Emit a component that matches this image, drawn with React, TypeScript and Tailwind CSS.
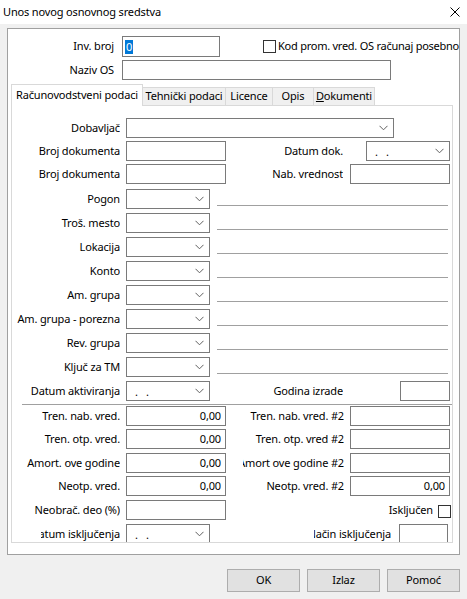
import React from 'react'

const font = { fontFamily: '"Noto Sans", "Open Sans", sans-serif' }

function Chevron() {
  return (
    <svg width="9" height="6" viewBox="0 0 9 6" className="shrink-0">
      <path d="M0.5 0.8 L4.5 4.8 L8.5 0.8" fill="none" stroke="#606060" strokeWidth="1" />
    </svg>
  )
}

function Box({ w, value, children }: { w: string; value?: string; children?: React.ReactNode }) {
  return (
    <div className={`${w} h-[20px] shrink-0 border border-[#7a7a7a] bg-white flex items-center justify-end pr-[4px] text-[11px] text-black`}>
      {value}
      {children}
    </div>
  )
}

function Combo({ w, date }: { w: string; date?: boolean }) {
  return (
    <div className={`${w} h-[20px] shrink-0 border border-[#7a7a7a] bg-white flex items-center justify-between pl-[8px] pr-[5px] text-[11px] text-black`}>
      <span className="leading-none">{date ? <>.&nbsp;&nbsp;&nbsp;.</> : ''}</span>
      <Chevron />
    </div>
  )
}

function Label({ className, text }: { className: string; text: string }) {
  return (
    <div className={`${className} h-[20px] shrink-0 flex items-center justify-end overflow-hidden whitespace-nowrap text-[11px] text-black`}>
      <span className="shrink-0">{text}</span>
    </div>
  )
}

function LookupRow({ label, mt }: { label: string; mt: string }) {
  return (
    <div className={`flex h-[20px] ${mt}`}>
      <Label className="w-[108px]" text={label} />
      <div className="ml-[6px]">
        <Combo w="w-[84px]" />
      </div>
      <div className="ml-[7px] mt-[16px] w-[231px] h-px bg-[#a0a0a0]" />
    </div>
  )
}

function ValueRow({ left, right, lv, rv, mt }: { left: string; right: string; lv: string; rv?: string; mt: string }) {
  return (
    <div className={`flex h-[20px] ${mt}`}>
      <Label className="w-[108px]" text={left} />
      <div className="ml-[6px]">
        <Box w="w-[100px]" value={lv} />
      </div>
      <Label className="ml-[17px] w-[101px]" text={right} />
      <div className="ml-[6px]">
        <Box w="w-[100px]" value={rv} />
      </div>
    </div>
  )
}

function Btn({ text }: { text: string }) {
  return (
    <div className="w-[73px] h-[23px] border border-[#adadad] bg-[#e1e1e1] flex items-center justify-center text-[11px] text-black">
      {text}
    </div>
  )
}

export default function App() {
  const lookups = ['Pogon', 'Troš. mesto', 'Lokacija', 'Konto', 'Am. grupa', 'Am. grupa - porezna', 'Rev. grupa', 'Ključ za TM']

  return (
    <div className="w-[467px] h-[599px] bg-[#f0f0f0] flex flex-col overflow-hidden tracking-[-0.15px]" style={font}>
      {/* title bar */}
      <div className="h-[24px] bg-white flex items-center justify-between pl-[3px] pr-[7px]">
        <span className="text-[11px] text-black">Unos novog osnovnog sredstva</span>
        <svg width="10" height="10" viewBox="0 0 10 10">
          <path d="M0.5 0.5 L9.5 9.5 M9.5 0.5 L0.5 9.5" stroke="#000" strokeWidth="1" />
        </svg>
      </div>

      {/* main panel */}
      <div className="mt-[4px] ml-[7px] w-[453px] h-[527px] border border-[#a0a0a0] bg-white flex flex-col">
        <div className="flex h-[21px] mt-[7px] items-center">
          <Label className="w-[106px]" text="Inv. broj" />
          <div className="ml-[8px] w-[99px] h-[21px] border border-[#7a7a7a] flex items-center pl-[2px]">
            <span className="bg-[#0078d7] text-white text-[11px] h-[14px] leading-[14px] px-px">0</span>
          </div>
          <div className="ml-[43px] w-[13px] h-[13px] border border-[#333] bg-white" />
          <span className="ml-[2px] text-[11px] text-black whitespace-nowrap tracking-[-0.25px]">Kod prom. vred. OS računaj posebno</span>
        </div>
        <div className="flex h-[20px] mt-[3px]">
          <Label className="w-[106px]" text="Naziv OS" />
          <div className="ml-[8px] w-[269px] h-[20px] border border-[#7a7a7a]" />
        </div>

        {/* tabs */}
        <div className="flex items-end h-[21px] mt-[4px] ml-[3px] text-[11px] text-black">
          <div className="relative z-10 -mb-px w-[132px] h-[22px] bg-white border-l border-t border-r border-[#d9d9d9] flex items-center justify-center">
            Računovodstveni podaci
          </div>
          <div className="w-[83px] h-[18px] bg-[#f0f0f0] border-t border-r border-[#d9d9d9] flex items-center justify-center">Tehnički podaci</div>
          <div className="w-[47px] h-[18px] bg-[#f0f0f0] border-t border-r border-[#d9d9d9] flex items-center justify-center">Licence</div>
          <div className="w-[41px] h-[18px] bg-[#f0f0f0] border-t border-r border-[#d9d9d9] flex items-center justify-center">Opis</div>
          <div className="w-[61px] h-[18px] bg-[#f0f0f0] border-t border-r border-[#d9d9d9] flex items-center justify-center">
            <span><span className="underline">D</span>okumenti</span>
          </div>
        </div>

        <div className="ml-[3px] w-[442px] h-[438px] border border-[#d9d9d9] bg-white overflow-hidden flex flex-col">
          <div className="flex h-[20px] mt-[12px]">
            <Label className="w-[108px]" text="Dobavljač" />
            <div className="ml-[6px]">
              <Combo w="w-[268px]" />
            </div>
          </div>
          <div className="flex h-[20px] mt-[3px]">
            <Label className="w-[108px]" text="Broj dokumenta" />
            <div className="ml-[6px]">
              <Box w="w-[100px]" />
            </div>
            <Label className="ml-[17px] w-[100px]" text="Datum dok." />
            <div className="ml-[23px]">
              <Combo w="w-[84px]" date />
            </div>
          </div>
          <div className="flex h-[20px] mt-[3px]">
            <Label className="w-[108px]" text="Broj dokumenta" />
            <div className="ml-[6px]">
              <Box w="w-[100px]" />
            </div>
            <Label className="ml-[17px] w-[100px]" text="Nab. vrednost" />
            <div className="ml-[7px]">
              <Box w="w-[100px]" />
            </div>
          </div>

          {lookups.map((l, i) => (
            <LookupRow key={l} label={l} mt={i === 0 ? 'mt-[5px]' : 'mt-[4px]'} />
          ))}

          <div className="flex h-[20px] mt-[4px]">
            <Label className="w-[108px]" text="Datum aktiviranja" />
            <div className="ml-[6px]">
              <Combo w="w-[84px]" date />
            </div>
            <Label className="ml-[33px] w-[100px]" text="Godina izrade" />
            <div className="ml-[57px]">
              <Box w="w-[50px]" />
            </div>
          </div>

          <div className="mt-[3px] ml-[10px] w-[430px] h-px bg-[#a0a0a0] shrink-0" />

          <ValueRow left="Tren. nab. vred." right="Tren. nab. vred. #2" lv="0,00" mt="mt-[1px]" />
          <ValueRow left="Tren. otp. vred." right="Tren. otp. vred #2" lv="0,00" mt="mt-[3px]" />
          <ValueRow left="Amort. ove godine" right="Amort ove godine #2" lv="0,00" mt="mt-[4px]" />
          <ValueRow left="Neotp. vred." right="Neotp. vred. #2" lv="0,00" rv="0,00" mt="mt-[3px]" />

          <div className="flex h-[20px] mt-[4px]">
            <Label className="w-[108px]" text="Neobrač. deo (%)" />
            <div className="ml-[6px]">
              <Box w="w-[100px]" />
            </div>
            <Label className="ml-[17px] w-[190px]" text="Isključen" />
            <div className="ml-[5px] mt-[5px] w-[13px] h-[13px] border border-[#333] bg-white shrink-0" />
          </div>

          <div className="flex h-[20px] mt-[4px] shrink-0">
            <Label className="ml-[29px] w-[79px]" text="Datum isključenja" />
            <div className="ml-[6px]">
              <Combo w="w-[84px]" date />
            </div>
            <Label className="ml-[104px] w-[77px]" text="Način isključenja" />
            <div className="ml-[8px]">
              <Box w="w-[49px]" />
            </div>
          </div>
        </div>
      </div>

      {/* buttons */}
      <div className="flex justify-end gap-[7px] mt-[14px] pr-[7px]">
        <Btn text="OK" />
        <Btn text="Izlaz" />
        <Btn text="Pomoć" />
      </div>
    </div>
  )
}
